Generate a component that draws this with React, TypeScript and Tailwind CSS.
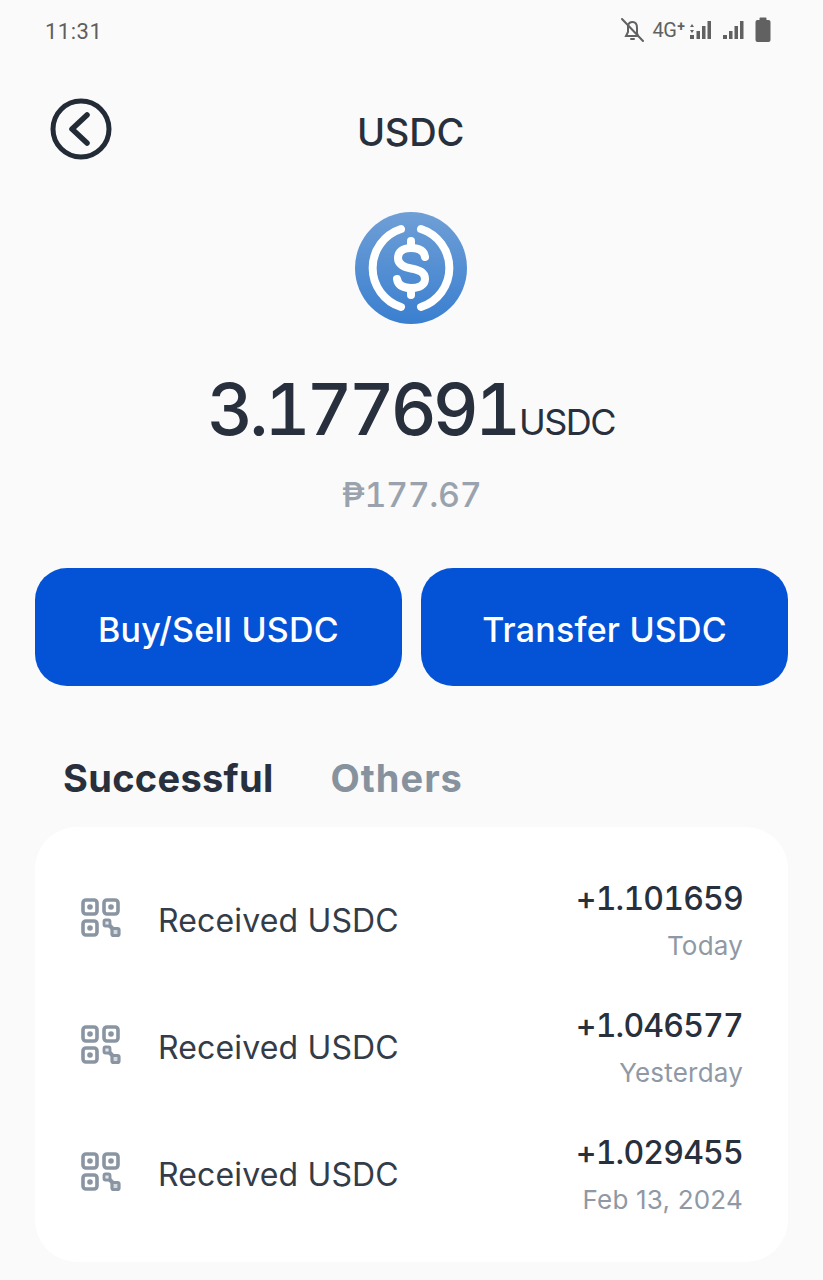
const rows = [
  { amount: "+1.101659", date: "Today" },
  { amount: "+1.046577", date: "Yesterday" },
  { amount: "+1.029455", date: "Feb 13, 2024" },
];

function QrIcon() {
  return (
    <svg width="42" height="42" viewBox="0 0 42 42" fill="none" className="shrink-0 mb-[4px]">
      <rect x="3" y="3" width="14" height="14" rx="3" stroke="#8a95a3" strokeWidth="3.6" />
      <rect x="24" y="3" width="14" height="14" rx="3" stroke="#8a95a3" strokeWidth="3.6" />
      <rect x="3" y="24" width="14" height="14" rx="3" stroke="#8a95a3" strokeWidth="3.6" />
      <circle cx="10" cy="10" r="2.8" fill="#8a95a3" />
      <circle cx="31" cy="10" r="2.8" fill="#8a95a3" />
      <circle cx="10" cy="31" r="2.8" fill="#8a95a3" />
      <path d="M27 26 L35 34" stroke="#8a95a3" strokeWidth="4" />
      <rect x="24" y="23" width="6" height="6" rx="1.5" fill="#e4e7eb" stroke="#8a95a3" strokeWidth="2.8" />
      <rect x="32" y="31.5" width="7" height="7" rx="1.5" fill="#d5d9de" stroke="#8a95a3" strokeWidth="3.2" />
    </svg>
  );
}

function UsdcLogo() {
  return (
    <svg width="112" height="112" viewBox="0 0 112 112" className="mr-[1px]">
      <defs>
        <linearGradient id="usdc" x1="0" y1="0" x2="0" y2="1">
          <stop offset="0" stopColor="#6f9fd6" />
          <stop offset="1" stopColor="#3a7fd0" />
        </linearGradient>
      </defs>
      <circle cx="56" cy="56" r="56" fill="url(#usdc)" />
      <path d="M46 17 A41 41 0 0 0 46 95" fill="none" stroke="#fff" strokeWidth="8" strokeLinecap="round" />
      <path d="M66 17 A41 41 0 0 1 66 95" fill="none" stroke="#fff" strokeWidth="8" strokeLinecap="round" />
      <path
        d="M70 45 C69 38 63 36 56 36 C48 36 43 40 43 46 C43 52 48 55 56 56.500 C64 58 70 60 70 67 C70 73 64 76 56 76 C48 76 43 73 42 67"
        fill="none"
        stroke="#fff"
        strokeWidth="8"
        strokeLinecap="round"
      />
      <path d="M56 29 V36 M56 76 V83" stroke="#fff" strokeWidth="8" strokeLinecap="round" />
    </svg>
  );
}

function StatusIcons() {
  return (
    <div className="flex items-center text-[#616161]">
      <svg width="24" height="26" viewBox="0 0 24 26" fill="none" stroke="#616161" strokeWidth="2" className="mr-[7px]">
        <path d="M1 2 L22 24" strokeLinecap="round" />
        <path d="M5 19 H17 L16 16 V11 C16 7 14 5 11.500 5 C9 5 7.500 6.500 7 8.500 V15 Z" />
        <path d="M10 22 H13" strokeLinecap="round" />
      </svg>
      <span className="text-[20px] leading-none font-normal tracking-[-0.5px] mr-[1px]">4G</span>
      <span className="text-[14px] leading-none font-bold self-start mt-[2px] mr-[4px]">+</span>
      <svg width="22" height="20" viewBox="0 0 22 20" fill="#616161" className="mr-[11px]">
        <path d="M1 7 L3 4 L5 7 Z M1 10 H5 L3 13 Z" />
        <rect x="1" y="15" width="4" height="4" />
        <rect x="7.500" y="11" width="3.500" height="8" />
        <rect x="13" y="6" width="3.500" height="13" />
        <rect x="18.500" y="1" width="3.500" height="18" />
      </svg>
      <svg width="22" height="20" viewBox="0 0 22 20" fill="#616161" className="mr-[11px]">
        <rect x="1" y="15" width="4" height="4" />
        <rect x="7" y="11" width="3.500" height="8" />
        <rect x="12.500" y="6" width="3.500" height="13" />
        <rect x="18" y="1" width="3.500" height="18" />
      </svg>
      <svg width="16" height="26" viewBox="0 0 16 26" fill="#616161">
        <rect x="0.500" y="3" width="15" height="22" rx="2" />
        <rect x="4.500" y="0.500" width="7" height="3" rx="1" />
      </svg>
    </div>
  );
}

export default function App() {
  return (
    <div className="w-[823px] h-[1280px] bg-[#fafafa] overflow-hidden font-['Inter',sans-serif]">
      <div className="flex justify-between items-center h-[60px] pl-[45px] pr-[52px] font-['Roboto',sans-serif]">
        <span className="text-[22px] text-[#5f5f5f] tracking-[0.5px] pt-[3px]">11:31</span>
        <StatusIcons />
      </div>

      <div className="relative flex justify-center items-center h-[134px] pt-[10px] pr-[2px]">
        <svg width="62" height="62" viewBox="0 0 62 62" fill="none" className="absolute left-[50px] top-[38px]">
          <circle cx="31" cy="31" r="28" stroke="#232b36" strokeWidth="5" />
          <path d="M37 17 L22 31 L37 45" stroke="#232b36" strokeWidth="5.500" strokeLinecap="round" strokeLinejoin="round" />
        </svg>
        <span className="text-[38px] leading-none font-medium text-[#27303c] tracking-[-0.2px]">USDC</span>
      </div>

      <div className="flex justify-center mt-[18px]">
        <UsdcLogo />
      </div>

      <div className="flex justify-center items-baseline mt-[40px] h-[90px] pr-[1px] text-[#27303c]">
        <span className="text-[71px] leading-[90px] font-medium tracking-[-3.9px] tabular-nums">3.177691</span>
        <span className="text-[36px] ml-[2px] tracking-[-1.6px]">USDC</span>
      </div>

      <p className="text-center text-[34px] leading-[44px] font-medium text-[#99a2ad] mt-[19px] tracking-[-0.4px] tabular-nums">₱177.67</p>

      <div className="grid grid-cols-2 gap-[19px] px-[35px] mt-[51px]">
        <button className="h-[118px] pt-[5px] rounded-[32px] bg-[#0452d6] text-white text-[34px] font-medium tracking-[0.25px]">
          Buy/Sell USDC
        </button>
        <button className="h-[118px] pt-[5px] rounded-[32px] bg-[#0452d6] text-white text-[34px] font-medium tracking-[0.2px]">
          Transfer USDC
        </button>
      </div>

      <div className="flex gap-[57px] pl-[63px] mt-[68px] h-[48px] items-center text-[38px] font-bold tracking-[0.3px]">
        <span className="text-[#27303c]">Successful</span>
        <span className="text-[#87929f] tracking-[1px]">Others</span>
      </div>

      <div className="mx-[35px] mt-[25px] h-[435px] bg-white rounded-[42px] pt-[29px] pl-[45px] pr-[45px]">
        {rows.map((row) => (
          <div key={row.amount} className="flex items-center h-[127px]">
            <QrIcon />
            <span className="ml-[36px] pt-[2px] text-[32px] text-[#333c48] tracking-[0.15px]">Received USDC</span>
            <div className="ml-auto text-right pt-[2px]">
              <p className="text-[32px] leading-[44px] font-medium text-[#27303c] tabular-nums tracking-[-0.8px]">{row.amount}</p>
              <p className="text-[26px] leading-[36px] mt-[7px] text-[#8f99a5] tracking-[0.2px]">{row.date}</p>
            </div>
          </div>
        ))}
      </div>
    </div>
  );
}
